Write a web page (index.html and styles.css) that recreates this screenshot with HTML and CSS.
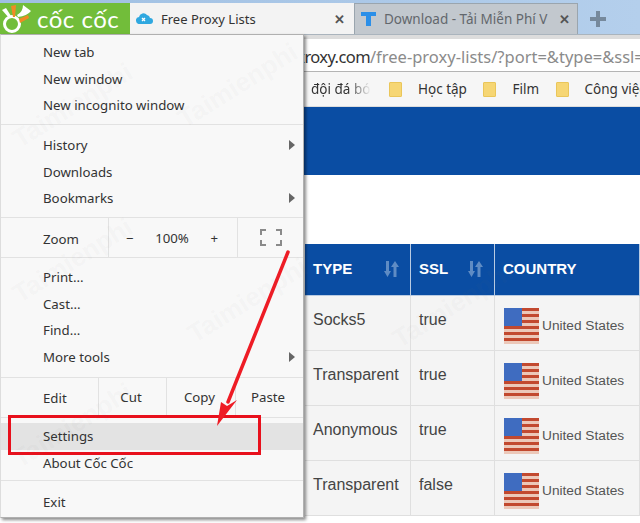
FILE: index.html
```html
<!DOCTYPE html>
<html lang="en">

<head>
    <meta charset="UTF-8">
    <meta name="viewport" content="width=device-width, initial-scale=1.0">
    <title>Free Proxy Lists</title>
    <link rel="stylesheet" href="styles.css">
</head>

<body>
    <div class="tabbar">
        <div class="brand">
            <svg class="brand-icon" width="32" height="32" viewBox="0 0 32 32">
                <circle cx="11" cy="21" r="7.500" fill="none" stroke="#fff" stroke-width="3"></circle>
                <path d="M10 3l5-1-1 12h-2z" fill="#f08a24"></path>
                <path d="M1 7l4-2 5 8-2 2z" fill="#fff"></path>
                <path d="M18 16l9-4 1 3-9 5z" fill="#f08a24"></path>
                <path d="M22 2l8 6q-4 5-13 6l-1-2q6-3 6-10z" fill="#fff"></path>
            </svg>
            <span>cốc cốc</span>
        </div>
        <div class="tab tab-active">
            <svg width="17" height="11" viewBox="0 0 17 11">
                <path d="M4 11a3.500 3.500 0 0 1-1-7 4.500 4.500 0 0 1 8-2 3.500 3.500 0 0 1 3 3 3 3 0 0 1 0 6z" fill="#2fa8e0"></path>
                <path d="M6 8l3-3M6 5l3 3" stroke="#fff" stroke-width="1.300"></path>
            </svg>
            <span class="tab-title">Free Proxy Lists</span>
            <span class="tab-close">✕</span>
        </div>
        <div class="tab tab-other">
            <svg width="15" height="14" viewBox="0 0 15 14">
                <path d="M0 0h15v4h-5v10H5V4H0z" fill="#2b8fe8"></path>
            </svg>
            <span class="tab-title">Download - Tải Miễn Phí V</span>
            <span class="tab-close">✕</span>
        </div>
        <svg class="new-tab" width="16" height="16" viewBox="0 0 16 16">
            <path d="M6 0h4v6h6v4h-6v6H6v-6H0V6h6z" fill="#76899c"></path>
        </svg>
    </div>

    <div class="addressbar">
        <span class="host">www.xroxy.com</span><span class="path">/free-proxy-lists/?port=&amp;type=&amp;ssl=</span>
    </div>

    <div class="bookmarks">
        <span class="bookmark-first">đội đá bóng</span>
        <span class="folder"></span><span class="bookmark">Học tập</span>
        <span class="folder"></span><span class="bookmark">Film</span>
        <span class="folder"></span><span class="bookmark">Công việc</span>
    </div>

    <div class="page-banner"></div>

    <div class="page-body">
        <table class="proxy-table">
            <thead>
                <tr>
                    <th class="col-type">TYPE
                        <svg class="sort" width="16" height="16" viewBox="0 0 16 16">
                            <path d="M2 0h3v10h2l-3.500 6L0 10h2zM11 0l4 6h-2.500v10h-3V6H7z" fill="#5f8cc4"></path>
                        </svg>
                    </th>
                    <th class="col-ssl">SSL
                        <svg class="sort" width="16" height="16" viewBox="0 0 16 16">
                            <path d="M2 0h3v10h2l-3.500 6L0 10h2zM11 0l4 6h-2.500v10h-3V6H7z" fill="#5f8cc4"></path>
                        </svg>
                    </th>
                    <th class="col-country">COUNTRY</th>
                </tr>
            </thead>
            <tbody>
                <tr>
                    <td>Socks5</td>
                    <td>true</td>
                    <td><span class="flag"><span class="canton"></span></span><span class="country">United States</span></td>
                </tr>
                <tr>
                    <td>Transparent</td>
                    <td>true</td>
                    <td><span class="flag"><span class="canton"></span></span><span class="country">United States</span></td>
                </tr>
                <tr>
                    <td>Anonymous</td>
                    <td>true</td>
                    <td><span class="flag"><span class="canton"></span></span><span class="country">United States</span></td>
                </tr>
                <tr>
                    <td>Transparent</td>
                    <td>false</td>
                    <td><span class="flag"><span class="canton"></span></span><span class="country">United States</span></td>
                </tr>
            </tbody>
        </table>
    </div>

    <div class="menu">
        <div class="menu-group group-one">
            <div class="item">New tab</div>
            <div class="item">New window</div>
            <div class="item">New incognito window</div>
        </div>
        <div class="menu-group group-two">
            <div class="item has-sub">History</div>
            <div class="item">Downloads</div>
            <div class="item has-sub">Bookmarks</div>
        </div>
        <div class="zoom-row">
            <div class="zoom-label">Zoom</div>
            <div class="zoom-controls">
                <span>−</span>
                <span>100%</span>
                <span>+</span>
            </div>
            <div class="zoom-full">
                <svg width="22" height="17" viewBox="0 0 22 17">
                    <path d="M1 6V1h5M16 1h5v5M21 11v5h-5M6 16H1v-5" fill="none" stroke="#8a8a8a" stroke-width="2"></path>
                </svg>
            </div>
        </div>
        <div class="menu-group group-three">
            <div class="item">Print...</div>
            <div class="item">Cast...</div>
            <div class="item">Find...</div>
            <div class="item has-sub">More tools</div>
        </div>
        <div class="edit-row">
            <div class="edit-label">Edit</div>
            <div class="edit-cell">Cut</div>
            <div class="edit-cell">Copy</div>
            <div class="edit-cell">Paste</div>
        </div>
        <div class="menu-group group-four">
            <div class="item item-hover">Settings</div>
            <div class="item">About Cốc Cốc</div>
        </div>
        <div class="menu-group group-five">
            <div class="item">Exit</div>
        </div>
    </div>

    <div class="highlight-box"></div>

    <svg class="arrow" width="640" height="523" viewBox="0 0 640 523">
        <path d="M288 252L228 402" stroke="#ee1c25" stroke-width="3.500" stroke-linecap="round"></path>
        <path d="M217 426L221 402 227 406 237 400z" fill="#ee1c25"></path>
    </svg>

    <div class="watermarks">
        <span class="wm wm-a">Taimienphi</span>
        <span class="wm wm-b">Taimienphi</span>
        <span class="wm wm-c">Taimienphi</span>
        <span class="wm wm-d">Taimienphi</span>
        <span class="wm wm-e">Taimienphi</span>
        <span class="wm wm-f">Taimienphi</span>
    </div>
</body>

</html>
```

FILE: styles.css
```css
body {
    margin: 0;
    width: 640px;
    height: 523px;
    overflow: hidden;
    position: relative;
    font-family: "Noto Sans", sans-serif;
    background-color: #fff;
    color: #333;
}

.tabbar {
    display: flex;
    align-items: stretch;
    height: 35px;
    padding-top: 3px;
    box-sizing: border-box;
    background: linear-gradient(to right, #9fbfe2, #b4cfec);
    border-bottom: 1px solid #aab4bd;
}

.brand {
    width: 130px;
    display: flex;
    align-items: center;
    background-color: #72bd3a;
    color: #fff;
    font-family: "Lato", sans-serif;
    font-size: 24px;
    letter-spacing: 0.5px;
    white-space: nowrap;
}

.brand-icon {
    flex: none;
    margin-left: 1px;
    margin-right: 4px;
}

.tab {
    width: 224px;
    display: flex;
    align-items: center;
    box-sizing: border-box;
    font-size: 13.500px;
    white-space: nowrap;
}

.tab-active {
    background-color: #f3f3f3;
    padding: 0 9px 0 6px;
    font-size: 13px;
}

.tab-other {
    background-color: #c2c8ce;
    border: 1px solid #9aa5ae;
    border-bottom: none;
    padding: 0 7px 0 6px;
    color: #62676c;
}

.tab-title {
    flex: 1;
    margin-left: 8px;
    overflow: hidden;
}

.tab-close {
    font-size: 13px;
    color: #555;
    font-weight: bold;
}

.new-tab {
    align-self: center;
    margin-left: 12px;
}

.addressbar {
    height: 37px;
    box-sizing: border-box;
    padding: 6px 0 0 256px;
    background-color: #fff;
    border-top: 4px solid #dcdcdc;
    border-bottom: 1px solid #b4b4b4;
    font-size: 16.500px;
    line-height: 24px;
    white-space: nowrap;
    overflow: hidden;
}

.host {
    color: #333;
    letter-spacing: -0.6px;
}

.path {
    color: #8b8b8b;
}

.bookmarks {
    height: 35px;
    box-sizing: border-box;
    display: flex;
    align-items: center;
    background-color: #f6f6f6;
    border-bottom: 1px solid #ddd;
    font-size: 13.500px;
    white-space: nowrap;
    overflow: hidden;
}

.bookmark-first {
    flex: none;
    width: 371px;
    box-sizing: border-box;
    padding-left: 311px;
    overflow: hidden;
    -webkit-mask-image: linear-gradient(to right, #000 348px, transparent 371px);
    mask-image: linear-gradient(to right, #000 348px, transparent 371px);
}

.folder {
    flex: none;
    width: 13px;
    height: 15px;
    margin-left: 16.500px;
    margin-right: 16px;
    background-color: #f6d674;
    border: 1px solid #eac65a;
    border-radius: 1px;
    box-sizing: border-box;
}

.bookmark-first + .folder {
    margin-left: 18px;
}

.bookmark {
    flex: none;
}

.page-banner {
    height: 68px;
    background-color: #0a4da3;
}

.page-body {
    padding: 69px 0 0 305px;
}

.proxy-table {
    border-collapse: collapse;
    table-layout: fixed;
    width: 335px;
    font-family: "Liberation Sans", sans-serif;
}

.proxy-table th {
    height: 48px;
    padding: 0 0 3px 8px;
    background-color: #0a4da3;
    color: #fff;
    font-size: 15px;
    text-align: left;
    border-right: 1px solid #b9cbe2;
    border-bottom: 1px solid #b9cbe2;
}

.col-type {
    width: 97px;
}

.col-ssl {
    width: 75px;
}

.sort {
    float: right;
    margin-top: 1px;
    margin-right: 10px;
}

.proxy-table td {
    height: 39px;
    padding: 15px 0 0 8px;
    vertical-align: top;
    background-color: #f4f4f4;
    font-size: 16px;
    color: #444;
    border-right: 1px solid #dfdfdf;
    border-bottom: 1px solid #dfdfdf;
    white-space: nowrap;
}

.proxy-table td:last-child {
    height: 42px;
    padding: 12px 0 0 9px;
}

.flag {
    display: inline-block;
    position: relative;
    width: 35px;
    height: 36px;
    vertical-align: middle;
    background: repeating-linear-gradient(#c2492f 0, #c2492f 3px, #ecc8b9 3px, #ecc8b9 6px);
}

.canton {
    position: absolute;
    left: 0;
    top: 0;
    width: 18px;
    height: 18px;
    background-color: #3f6cc0;
}

.country {
    margin-left: 3px;
    font-size: 13.700px;
    color: #555;
}

.menu {
    position: absolute;
    left: 0;
    top: 34px;
    width: 304px;
    height: 484px;
    box-sizing: border-box;
    background-color: #f8f8f8;
    border: 1px solid #b0b0b0;
    border-left-color: #ddd;
    box-shadow: 2px 2px 3px rgba(0, 0, 0, 0.45);
    font-size: 13.250px;
}

.menu-group {
    border-bottom: 1px solid #e2e2e2;
}

.group-one {
    padding: 4px 0 5.500px;
}

.group-two {
    padding: 7px 0 5.500px;
}

.group-three {
    padding: 6px 0 7px;
}

.group-four {
    padding: 5px 0 4px;
}

.group-five {
    padding: 8px 0 0;
    border-bottom: none;
}

.item {
    position: relative;
    height: 26.500px;
    line-height: 26.500px;
    padding-left: 42px;
}

.item-hover {
    background-color: #e3e3e3;
}

.has-sub::after {
    content: "";
    position: absolute;
    right: 8px;
    top: 8px;
    border-left: 6px solid #666;
    border-top: 5px solid transparent;
    border-bottom: 5px solid transparent;
}

.zoom-row {
    height: 39px;
    display: flex;
    align-items: center;
    border-bottom: 1px solid #e2e2e2;
}

.zoom-label {
    width: 65px;
    padding-left: 42px;
    padding-top: 2px;
}

.zoom-controls {
    width: 130px;
    height: 100%;
    box-sizing: border-box;
    display: flex;
    align-items: center;
    justify-content: space-between;
    padding: 0 19px 0 17px;
    border-left: 1px solid #e2e2e2;
    border-right: 1px solid #e2e2e2;
}

.zoom-full {
    flex: 1;
    display: flex;
    justify-content: center;
    padding-left: 1px;
    padding-right: 1px;
}

.edit-row {
    height: 39px;
    display: grid;
    grid-template-columns: 97px 68px 69px 1fr;
    border-bottom: 1px solid #e2e2e2;
}

.edit-label {
    padding-left: 42px;
    line-height: 40px;
}

.edit-cell {
    text-align: center;
    line-height: 38px;
    padding-right: 3px;
    border-left: 1px solid #e2e2e2;
}

.highlight-box {
    position: absolute;
    left: 8px;
    top: 415px;
    width: 253px;
    height: 40px;
    box-sizing: border-box;
    border: 3px solid #e8101c;
}

.arrow {
    position: absolute;
    left: 0;
    top: 0;
}

.wm {
    position: absolute;
    font-family: "Liberation Sans", sans-serif;
    font-size: 26px;
    font-weight: bold;
    color: rgba(120, 120, 120, 0.05);
    transform: rotate(-32deg);
    white-space: nowrap;
}

.wm-a {
    left: 5px;
    top: 90px;
}

.wm-b {
    left: 170px;
    top: 70px;
}

.wm-c {
    left: 5px;
    top: 245px;
}

.wm-d {
    left: 180px;
    top: 285px;
}

.wm-e {
    left: 5px;
    top: 410px;
}

.wm-f {
    left: 385px;
    top: 290px;
}
```
